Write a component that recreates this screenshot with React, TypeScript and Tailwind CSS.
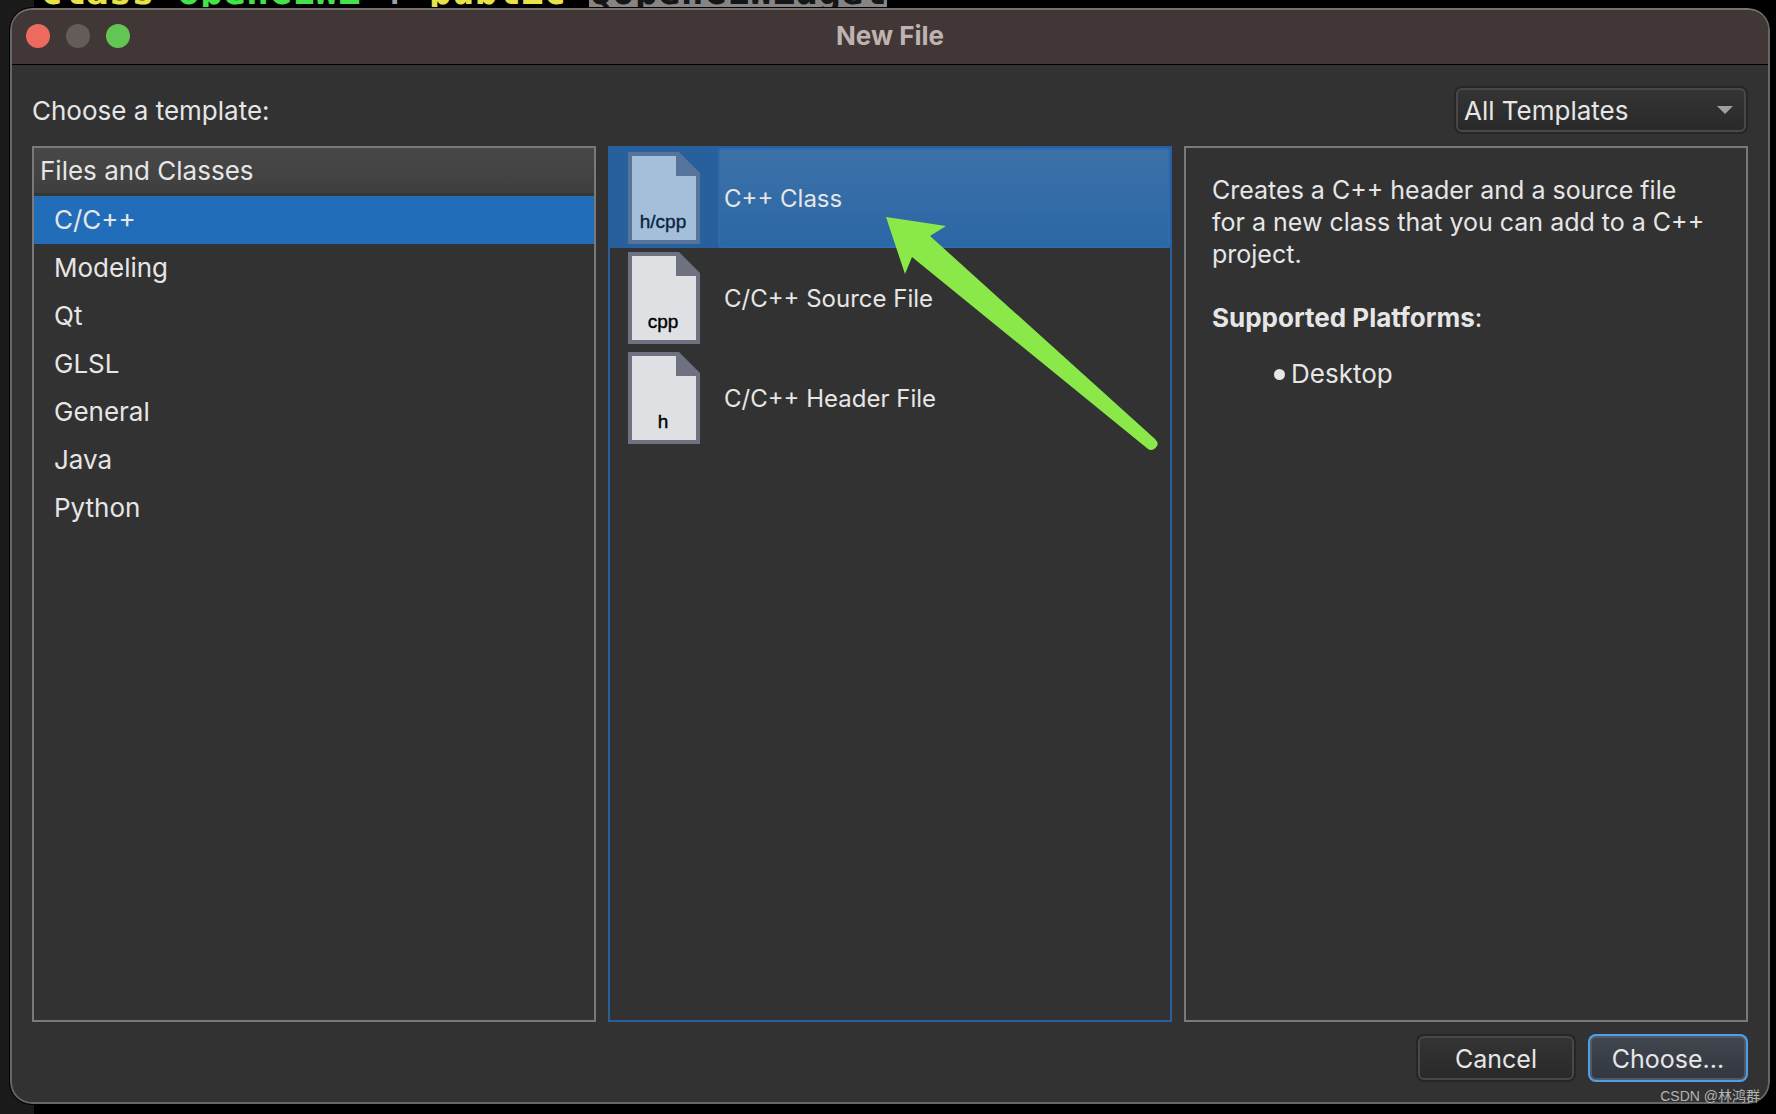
import { useState } from "react";

const categories = ["C/C++", "Modeling", "Qt", "GLSL", "General", "Java", "Python"];

const templates = [
  { badge: "h/cpp", name: "C++ Class" },
  { badge: "cpp", name: "C/C++ Source File" },
  { badge: "h", name: "C/C++ Header File" },
];

function FileIcon({ label, selected }: { label: string; selected: boolean }) {
  const frame = selected ? "#56749b" : "#6d7180";
  const paper = selected ? "#a5bfdb" : "#dfe0e4";
  const ink = selected ? "#0b2542" : "#000000";
  return (
    <svg width="72" height="92" viewBox="0 0 72 92" className="shrink-0" aria-hidden="true">
      <path d="M0 0H51L72 21V92H0Z" fill={frame} />
      <path d="M4 4H48V24H68V88H4Z" fill={paper} />
      <text
        x="35"
        y="76"
        textAnchor="middle"
        fill={ink}
        stroke={ink}
        strokeWidth="0.4"
        fontSize="19"
        fontFamily="'Liberation Sans', sans-serif"
      >
        {label}
      </text>
    </svg>
  );
}

function CodeLine() {
  return (
    <div
      aria-hidden="true"
      className="absolute top-0 right-0 left-[34px] h-[7px] overflow-hidden bg-black pl-[6px] font-['DejaVu_Sans_Mono',monospace] text-[38px] font-bold whitespace-pre"
    >
      <div className="-mt-[29px] leading-[40px]">
        <span className="text-[#e9e34a]">class</span> <span className="text-[#45e34a]">openGLWi</span>{" "}
        <span className="font-normal text-[#a0a0a0]">:</span> <span className="text-[#e9e34a]">public</span>{" "}
        <span className="inline-block bg-[#858585] text-[#151515]">QOpenGLWidget</span>
      </div>
    </div>
  );
}

function Arrow() {
  return (
    <svg
      width="272"
      height="236"
      viewBox="0 0 272 236"
      className="pointer-events-none absolute top-[68px] left-[276px]"
      aria-hidden="true"
    >
      <path d="M0 1L60 10L44 20L269 223Q273 227 271 230Q267 236 262 233L26 41L19 58Z" fill="#8ae948" />
    </svg>
  );
}

export default function App() {
  const [category, setCategory] = useState("C/C++");
  const [template, setTemplate] = useState("C++ Class");

  return (
    <div className="relative flex min-h-screen bg-black bg-[linear-gradient(90deg,#1a1a1a_34px,#000_34px)] pt-2 pr-[6px] pb-[10px] pl-[10px] font-[Inter,sans-serif] text-[26px] text-[#e6e6e6]">
      <CodeLine />
      <div
        role="dialog"
        aria-labelledby="dialog-title"
        className="relative flex flex-1 flex-col overflow-hidden rounded-[22px] border-2 border-[#666666] border-t-[#77716f] bg-[#323232] outline outline-black"
      >
        <header className="relative flex h-[55px] shrink-0 items-center justify-center border-b border-black bg-[#413736]">
          <div className="absolute left-[14px] flex gap-4 pb-[2px]">
            <button type="button" aria-label="Close" className="size-6 rounded-full bg-[#ed6a5e]" />
            <button type="button" aria-label="Minimize" className="size-6 rounded-full bg-[#635c59]" />
            <button type="button" aria-label="Zoom" className="size-6 rounded-full bg-[#62c554]" />
          </div>
          <h1 id="dialog-title" className="pb-1 font-bold text-[#bfb3b1]">
            New File
          </h1>
        </header>

        <div className="flex flex-1 flex-col gap-3 px-5 pt-[21px] pb-5">
          <div className="flex items-center justify-between">
            <label htmlFor="filter">Choose a template:</label>
            <div className="relative rounded-lg bg-[#262626] p-[2px]">
              <select
                id="filter"
                className="block h-11 w-[290px] appearance-none rounded-md border-2 border-[#484848] bg-linear-to-b from-[#343434] to-[#292929] pl-[6px] outline-none"
              >
                <option>All Templates</option>
              </select>
              <svg
                width="16"
                height="8"
                viewBox="0 0 16 8"
                className="pointer-events-none absolute top-5 right-[15px]"
                aria-hidden="true"
              >
                <path d="M0 0H16L8 8Z" fill="#a0a0a0" />
              </svg>
            </div>
          </div>

          <main className="grid flex-1 grid-cols-3 gap-3">
            <section className="border-2 border-[#797979]">
              <h2 className="flex h-12 items-center border-b-3 border-[#363636] bg-linear-to-b from-[#484848] to-[#3f3f3f] pl-[6px]">
                Files and Classes
              </h2>
              <ul>
                {categories.map((name) => (
                  <li key={name}>
                    <button
                      type="button"
                      aria-pressed={name === category}
                      onClick={() => setCategory(name)}
                      className={`flex h-12 w-full items-center pb-[2px] pl-5 ${name === category ? "bg-[#226dba]" : ""}`}
                    >
                      {name}
                    </button>
                  </li>
                ))}
              </ul>
            </section>

            <section className="relative border-2 border-[#27609d]">
              <ul>
                {templates.map(({ badge, name }) => {
                  const selected = name === template;
                  return (
                    <li key={name}>
                      <button
                        type="button"
                        aria-pressed={selected}
                        onClick={() => setTemplate(name)}
                        className={`flex h-[100px] w-full items-center gap-[18px] pl-[18px] text-left text-2xl ${selected ? "bg-[#27609d]" : ""}`}
                      >
                        <FileIcon label={badge} selected={selected} />
                        <span
                          className={`flex flex-1 items-center self-stretch rounded-sm border-2 pt-[2px] pl-1 ${selected ? "border-[#2f6cae] bg-linear-to-b from-[#3d71a8] to-[#2a67a5]" : "border-transparent"}`}
                        >
                          {name}
                        </span>
                      </button>
                    </li>
                  );
                })}
              </ul>
              <Arrow />
            </section>

            <section className="border-2 border-[#797979] pt-[26px] pr-9 pl-[26px] leading-8">
              <p className="text-[25px] leading-8">
                Creates a C++ header and a source file for a new class that you can add to a C++ project.
              </p>
              <p className="mt-8">
                <strong className="font-bold">Supported Platforms</strong>:
              </p>
              <ul className="mt-6 pl-[62px]">
                <li className="flex items-center gap-[6px]">
                  <span className="size-[11px] rounded-full bg-[#e6e6e6]" />
                  Desktop
                </li>
              </ul>
            </section>
          </main>

          <footer className="flex justify-end gap-3">
            <div className="rounded-lg bg-[#262626] p-[2px]">
              <button
                type="button"
                className="block h-11 w-[156px] rounded-md border-2 border-[#484848] bg-linear-to-b from-[#343434] to-[#292929] pt-[3px] text-[25px]"
              >
                Cancel
              </button>
            </div>
            <div className="rounded-lg bg-[#4f9ff0] p-[2px]">
              <button
                type="button"
                className="block h-11 w-[156px] rounded-md border-2 border-[#545860] bg-linear-to-b from-[#40454e] to-[#333740] pt-[3px] text-[25px]"
              >
                Choose...
              </button>
            </div>
          </footer>
        </div>
      </div>
      <div className="absolute right-4 bottom-2 font-['Liberation_Sans','Noto_Sans_CJK_SC',sans-serif] text-sm text-[#b4b4b4]">
        CSDN @林鸿群
      </div>
    </div>
  );
}
